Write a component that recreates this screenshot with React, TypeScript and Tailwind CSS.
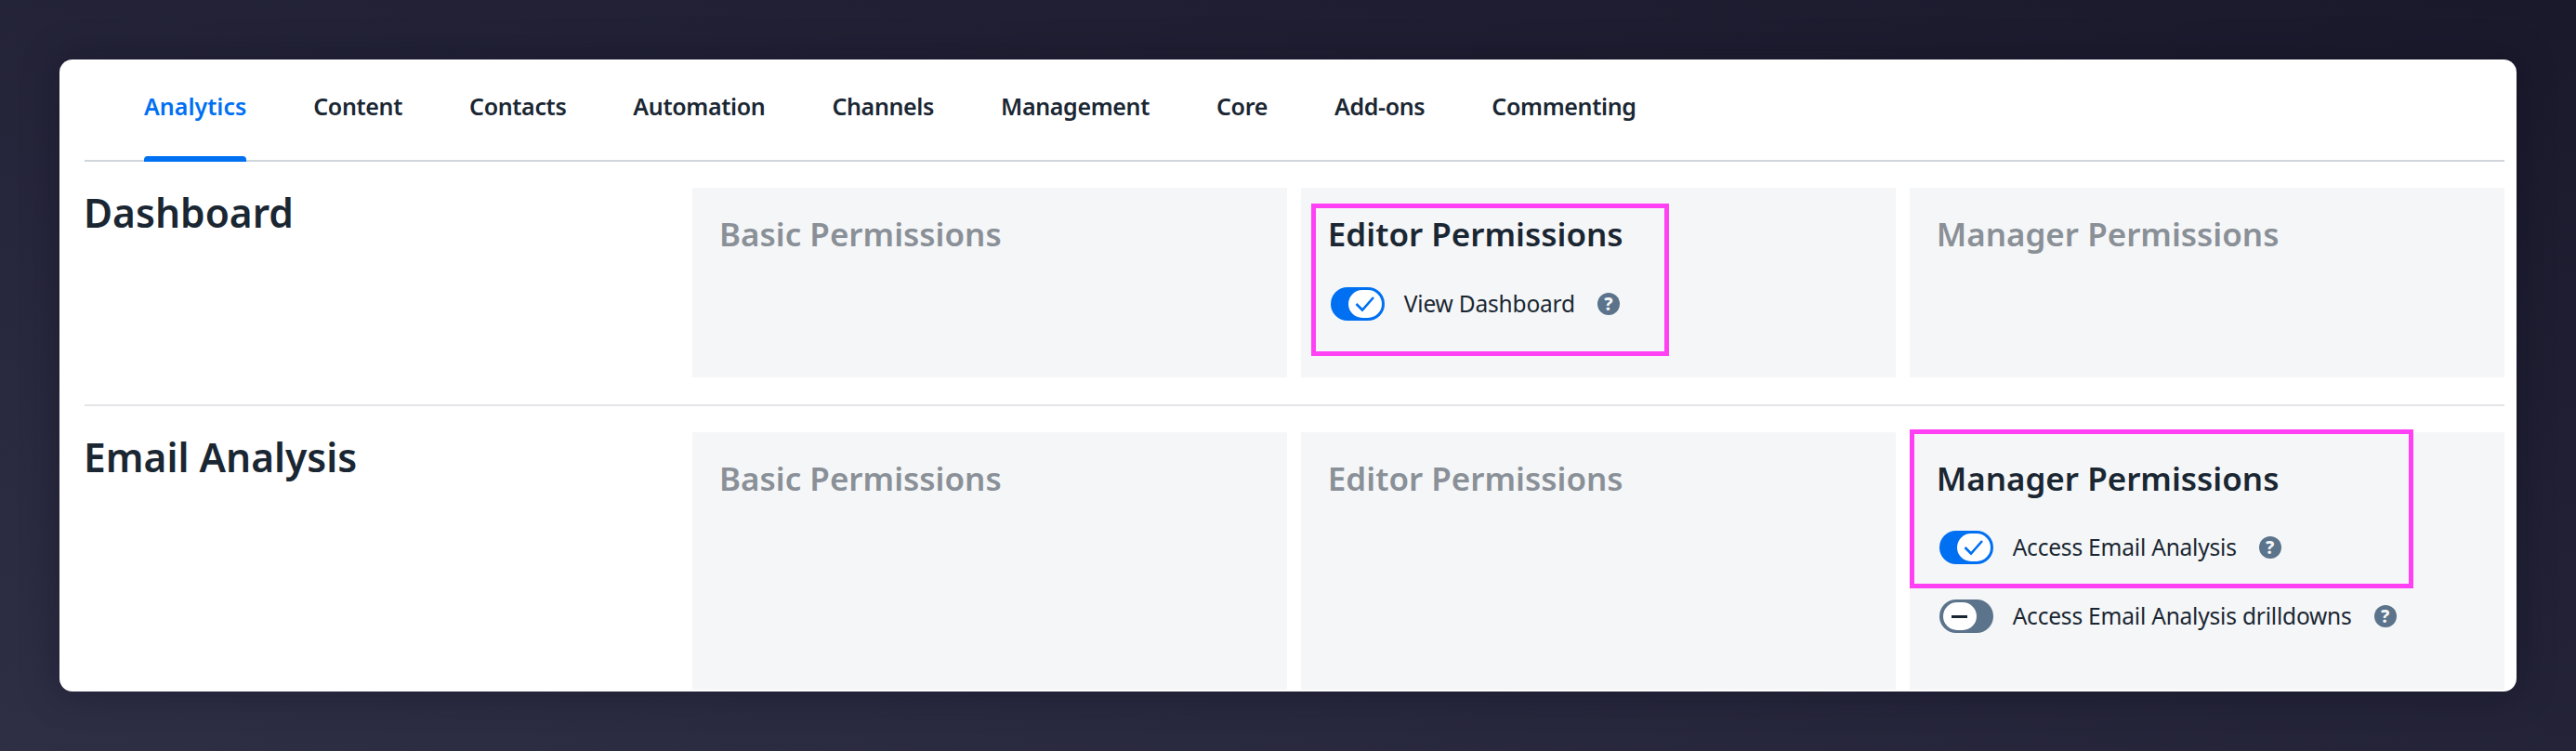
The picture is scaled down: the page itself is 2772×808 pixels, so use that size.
const tabs = ["Analytics", "Content", "Contacts", "Automation", "Channels", "Management", "Core", "Add-ons", "Commenting"];

function Toggle({ on }: { on: boolean }) {
  if (on) {
    return (
      <span className="relative h-[36px] w-[58px] shrink-0 rounded-full bg-[#0070f2]">
        <span className="absolute right-[3px] top-[3px] flex h-[30px] w-[36px] items-center justify-center rounded-full bg-white">
          <svg width="22" height="18" viewBox="0 0 22 18" fill="none" stroke="#0070f2" strokeWidth="2.6">
            <path d="M1.5 9 8 15.5 20 2" />
          </svg>
        </span>
      </span>
    );
  }
  return (
    <span className="relative h-[36px] w-[58px] shrink-0 rounded-full bg-[#5b738b]">
      <span className="absolute left-[4px] top-[3px] flex h-[30px] w-[36px] items-center justify-center rounded-full bg-white">
        <span className="h-[3px] w-[17px] bg-[#1a2733]" />
      </span>
    </span>
  );
}

function Permission({ label, on }: { label: string; on: boolean }) {
  return (
    <div className="ml-[3px] flex h-[36px] items-center">
      <Toggle on={on} />
      <span className="ml-[21px] text-[24.5px] leading-[36px] tracking-[-0.2px] text-[#1a2733]">{label}</span>
      <span className="ml-[24px] flex h-[24px] w-[24px] items-center justify-center rounded-full bg-[#5b738b] text-[19px] font-extrabold leading-none text-[#f5f6f7]">
        ?
      </span>
    </div>
  );
}

function Panel({ title, active, children }: { title: string; active?: boolean; children?: React.ReactNode }) {
  return (
    <div className="relative bg-[#f5f6f7] pl-[29px] pt-[28px]">
      <h3 className={`text-[35px] font-semibold leading-[44px] ${active ? "text-[#1a2733]" : "text-[#8a9097]"}`}>{title}</h3>
      {children}
    </div>
  );
}

export default function App() {
  return (
    <div className="h-[808px] w-full bg-gradient-to-bl from-[#1a192c] to-[#2e2e45] p-[64px] font-['Noto_Sans',sans-serif]">
      <div className="h-[680px] overflow-hidden rounded-[14px] bg-white pl-[27px] pr-[13px] shadow-[0_0_40px_rgba(10,10,25,0.35)]">
        <nav className="flex h-[110px] gap-[72px] border-b-2 border-[#d0d5da] pl-[64px]">
          {tabs.map((t, i) => (
            <button key={t} className={`relative h-[108px] pb-[6px] text-[25px] font-semibold ${i === 0 ? "text-[#0070f2]" : "tracking-[-0.35px] text-[#1a2733]"}`}>
              {t}
              {i === 0 && <span className="absolute -bottom-[2px] left-0 h-[6px] w-full rounded-t-[4px] bg-[#0070f2]" />}
            </button>
          ))}
        </nav>

        <section className="grid grid-cols-[654px_1fr] pt-[28px]">
          <h2 className="-ml-[1px] pt-[1px] text-[42.5px] font-semibold leading-[52px] text-[#1a2733]">Dashboard</h2>
          <div className="grid h-[204px] grid-cols-3 gap-[14.5px]">
            <Panel title="Basic Permissions" />
            <Panel title="Editor Permissions" active>
              <div className="mt-[35px]">
                <Permission label="View Dashboard" on />
              </div>
              <div className="absolute left-[11px] top-[17px] h-[164px] w-[385px] border-[5px] border-[#ff40f5]" />
            </Panel>
            <Panel title="Manager Permissions" />
          </div>
        </section>

        <div className="mt-[29px] h-[2px] bg-[#e3e5e8]" />

        <section className="grid grid-cols-[654px_1fr] pt-[28px]">
          <h2 className="-ml-[1px] pt-[1px] text-[42.5px] font-semibold leading-[52px] text-[#1a2733]">Email Analysis</h2>
          <div className="grid h-[277px] grid-cols-3 gap-[14.5px]">
            <Panel title="Basic Permissions" />
            <Panel title="Editor Permissions" />
            <Panel title="Manager Permissions" active>
              <div className="mt-[34px] flex flex-col gap-[38px]">
                <Permission label="Access Email Analysis" on />
                <Permission label="Access Email Analysis drilldowns" on={false} />
              </div>
              <div className="absolute -top-[3px] left-0 h-[171px] w-[542px] border-[5px] border-[#ff40f5]" />
            </Panel>
          </div>
        </section>
      </div>
    </div>
  );
}
